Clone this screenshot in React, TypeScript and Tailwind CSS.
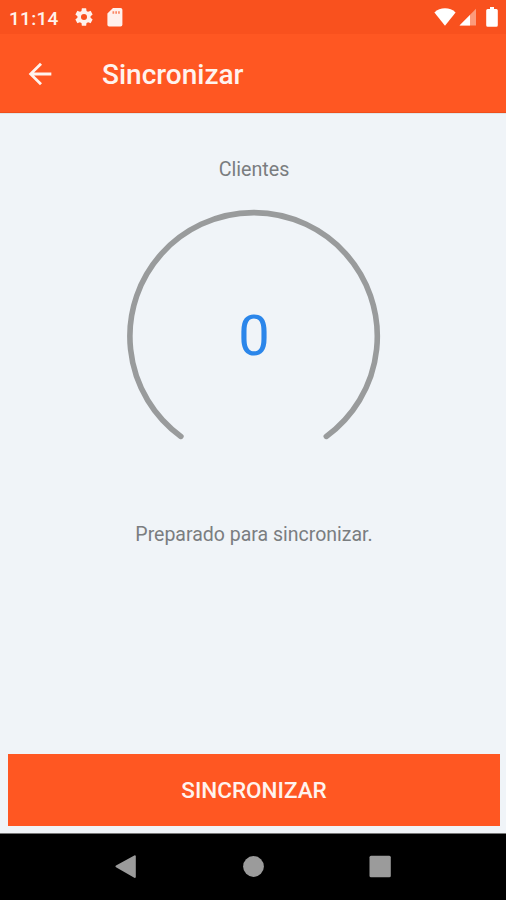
function StatusBar() {
  return (
    <div className="flex h-[34px] items-center bg-[#f9511e] pl-[9px] text-[#fff1ec]">
      <span className="w-[66px] pt-[2px] text-[19px] leading-none font-medium tracking-[0.3px]">
        11:14
      </span>
      <svg className="h-[22px] w-[22px] shrink-0 -ml-[2px]" viewBox="0 0 24 24" fill="currentColor">
        <path d="M19.14 12.94c.04-.3.06-.61.06-.94 0-.32-.02-.64-.07-.94l2.03-1.58a.49.49 0 0 0 .12-.61l-1.92-3.32a.49.49 0 0 0-.59-.22l-2.39.96a7.03 7.03 0 0 0-1.62-.94l-.36-2.54a.48.48 0 0 0-.48-.41h-3.84a.48.48 0 0 0-.47.41l-.36 2.54c-.59.24-1.13.57-1.62.94l-2.39-.96a.48.48 0 0 0-.59.22L2.74 8.87a.48.48 0 0 0 .12.61l2.03 1.58c-.05.3-.09.63-.09.94s.02.64.07.94l-2.03 1.58a.49.49 0 0 0-.12.61l1.92 3.32c.12.22.37.29.59.22l2.39-.96c.5.38 1.03.7 1.62.94l.36 2.54c.05.24.24.41.48.41h3.84c.24 0 .44-.17.47-.41l.36-2.54c.59-.24 1.13-.56 1.62-.94l2.39.96c.22.08.47 0 .59-.22l1.92-3.32a.48.48 0 0 0-.12-.61zM12 15.3a3.3 3.3 0 1 1 0-6.6 3.3 3.3 0 0 1 0 6.6z" />
      </svg>
      <svg className="ml-[12px] h-[19px] w-[16px] shrink-0" viewBox="0 0 16 19">
        <path
          d="M6 0h7.6a1.8 1.8 0 0 1 1.8 1.8v14.9a1.8 1.8 0 0 1-1.8 1.8H2.2a1.8 1.8 0 0 1-1.8-1.8V5.6z"
          fill="currentColor"
        />
        <path d="M5.5 3.2h1.7v2.6H5.5zM8.3 3.2H10v2.6H8.3zM11.1 3.2h1.7v2.6h-1.7z" fill="#fb8764" />
      </svg>
      <div className="ml-auto flex items-center pr-[8px] text-white">
        <svg className="h-[18px] w-[22px]" viewBox="0 0 22 18">
          <path d="M11 17.7.4 4.4C3.2 1.8 7 .3 11 .3s7.8 1.5 10.6 4.1z" fill="currentColor" />
        </svg>
        <svg className="ml-[3px] h-[18px] w-[18px]" viewBox="0 0 18 18">
          <path d="M17 .8v16.7H.5z" fill="#fc9b7c" />
          <path d="M11 6.9v10.6H.5z" fill="currentColor" />
        </svg>
        <svg className="ml-[9px] h-[20px] w-[12px]" viewBox="0 0 12 20">
          <path
            d="M4 0h4v2h2.3A1.5 1.5 0 0 1 11.8 3.5v14.7a1.5 1.5 0 0 1-1.5 1.5H1.7a1.5 1.5 0 0 1-1.5-1.5V3.5A1.5 1.5 0 0 1 1.7 2H4z"
            fill="currentColor"
          />
        </svg>
      </div>
    </div>
  );
}

function AppBar() {
  return (
    <header className="flex h-[79px] items-center border-b border-[#f04e1a] bg-[#ff5722] pt-[2px] pl-[23px] text-[#fff3ee]">
      <button aria-label="Voltar">
        <svg className="h-[34px] w-[34px]" viewBox="0 0 24 24" fill="currentColor">
          <path d="M20 11H7.83l5.59-5.59L12 4l-8 8 8 8 1.41-1.41L7.83 13H20v-2z" />
        </svg>
      </button>
      <h1 className="ml-[45px] pt-[2px] text-[28px] leading-none font-medium">Sincronizar</h1>
    </header>
  );
}

function Gauge({ value }: { value: number }) {
  return (
    <div className="relative mt-[27px] h-[254px] w-[254px]">
      <svg className="h-full w-full" viewBox="0 0 254 254" fill="none">
        <path
          d="M53.9 227.4A123.7 123.7 0 1 1 199.3 227.4"
          stroke="#999b9c"
          strokeWidth="5.6"
          strokeLinecap="round"
        />
      </svg>
      <span className="absolute inset-0 flex items-center justify-center text-[56px] leading-none text-[#2b86ea]">
        {value}
      </span>
    </div>
  );
}

function NavigationBar() {
  return (
    <nav className="h-[67px] border-t border-[#777] bg-black">
      <svg className="h-[66px] w-full" viewBox="0 0 506 66" fill="#9b9b9b">
        <path d="M134.8 21.200a1 1 0 0 1 1 .9v20.800a1 1 0 0 1-1.500.9l-18.300-10.500a1 1 0 0 1 0-1.700l18.300-10.200z" />
        <circle cx="253.5" cy="32.5" r="10.4" />
        <rect x="369.5" y="21.7" width="21.3" height="21.5" rx="1.5" />
      </svg>
    </nav>
  );
}

export default function App() {
  return (
    <div className="flex h-[900px] w-[506px] flex-col overflow-hidden bg-[#f0f4f8] font-[Roboto,sans-serif]">
      <StatusBar />
      <AppBar />
      <main className="flex flex-1 flex-col items-center border-t border-[#dfe5e8] pt-[44px] pr-[6px] pb-[7px] pl-[8px]">
        <p className="text-[19.7px] leading-[24px] text-[#7a7d80]">Clientes</p>
        <Gauge value={0} />
        <p className="mt-[60px] text-[19.5px] leading-[24px] text-[#7a7d80]">
          Preparado para sincronizar.
        </p>
        <button className="mt-auto h-[72px] w-full bg-[#ff5722] pt-[2px] text-[22.5px] font-medium text-[#fff3ee]">
          SINCRONIZAR
        </button>
      </main>
      <NavigationBar />
    </div>
  );
}
